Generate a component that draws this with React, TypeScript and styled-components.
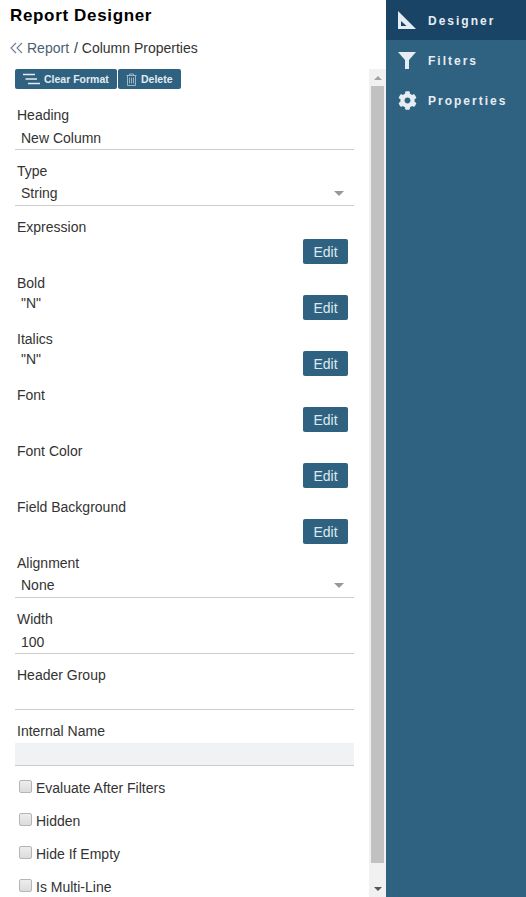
import React from "react";
import styled, { createGlobalStyle } from "styled-components";
import { FaCog } from "react-icons/fa";

const GlobalStyle = createGlobalStyle`
  html, body {
    margin: 0;
    padding: 0;
    height: 100%;
    overflow: hidden;
    background: #fff;
    font-family: "Liberation Sans", Arial, sans-serif;
  }
`;

const Page = styled.div`
  display: flex;
  width: 526px;
  height: 897px;
  overflow: hidden;
`;

const Main = styled.main`
  width: 386px;
  height: 897px;
  display: flex;
  flex-direction: column;
`;

const Title = styled.h1`
  margin: 0;
  padding: 6px 0 0 10px;
  height: 25px;
  font-size: 17px;
  line-height: 20px;
  font-weight: 700;
  letter-spacing: 0.66px;
  color: #000;
`;

const Breadcrumb = styled.div`
  display: flex;
  align-items: center;
  height: 38px;
  box-sizing: border-box;
  padding: 0 0 4px 10px;
  font-size: 14px;
  color: #333;
`;

const CrumbLink = styled.span`
  color: #4b5f73;
  margin: 0 5px 0 4px;
`;

const Body = styled.div`
  flex: 1;
  min-height: 0;
  display: flex;
`;

const Scroller = styled.div`
  width: 369px;
  overflow: hidden;
  padding: 0 15px;
  box-sizing: border-box;
`;

const Toolbar = styled.div`
  display: flex;
  gap: 1px;
  margin-bottom: 16px;
`;

const ToolButton = styled.button<{ $width: number }>`
  display: flex;
  align-items: center;
  gap: 4px;
  width: ${({ $width }) => $width}px;
  height: 20px;
  box-sizing: border-box;
  padding: 0 0 0 8px;
  border: 0;
  border-radius: 2px;
  background: #2f6280;
  color: #e3ebf0;
  font-family: inherit;
  font-size: 10.5px;
  font-weight: 700;
`;

const Field = styled.div<{ $short?: boolean }>`
  height: ${({ $short }) => ($short ? 50 : 56)}px;
`;

const Label = styled.div`
  height: 20px;
  padding-left: 2px;
  font-size: 14px;
  line-height: 20px;
  color: #333;
`;

const Value = styled.div<{ $select?: boolean }>`
  height: 25px;
  box-sizing: border-box;
  padding: ${({ $select }) => ($select ? 2 : 3)}px 6px 0;
  font-size: 14px;
  line-height: 20px;
  color: #333;
  display: flex;
  align-items: flex-start;
  justify-content: space-between;
  border-bottom: 1px solid #ccc;
`;

const ReadOnlyValue = styled.div`
  height: 23px;
  margin-top: 2px;
  box-sizing: border-box;
  border-bottom: 1px solid #ccc;
  background: #f1f2f3;
`;

const Caret = styled.span`
  width: 0;
  height: 0;
  margin: 8px 4px 0 0;
  border-left: 5px solid transparent;
  border-right: 5px solid transparent;
  border-top: 5px solid #999;
`;

const EditRow = styled.div`
  display: flex;
  justify-content: space-between;
  align-items: flex-start;
  padding: 2px 6px 0;
  font-size: 14px;
  line-height: 16px;
  color: #333;
`;

const EditButton = styled.button`
  width: 45px;
  height: 25px;
  border: 0;
  border-radius: 2px;
  background: #2f6280;
  color: #dfe8ee;
  font-family: inherit;
  font-size: 14px;
  padding: 0;
`;

const CheckRow = styled.label`
  display: flex;
  align-items: center;
  height: 33px;
  padding-left: 4px;
  gap: 4px;
  font-size: 14px;
  color: #333;
`;

const CheckBox = styled.span`
  width: 13px;
  height: 13px;
  box-sizing: border-box;
  margin-top: -3px;
  border: 1px solid #b5b5b5;
  border-radius: 2px;
  background: linear-gradient(#ededed, #dcdcdc);
`;

const ScrollBar = styled.div`
  width: 17px;
  display: flex;
  flex-direction: column;
  align-items: center;
  background: #f1f1f1;
`;

const ScrollEnd = styled.div`
  height: 17px;
  width: 100%;
  display: flex;
  align-items: center;
  justify-content: center;
`;

const ScrollSpacer = styled.div`
  flex: 1;
`;

const Arrow = styled.span<{ $down?: boolean }>`
  width: 0;
  height: 0;
  border-left: 4px solid transparent;
  border-right: 4px solid transparent;
  border-top: ${({ $down }) => ($down ? "4px solid #555" : "0")};
  border-bottom: ${({ $down }) => ($down ? "0" : "4px solid #a3a3a3")};
`;

const Thumb = styled.div`
  width: 13px;
  height: 777px;
  background: #c1c1c1;
`;

const Sidebar = styled.nav`
  width: 140px;
  height: 897px;
  background: #2f6280;
`;

const NavItem = styled.div<{ $active?: boolean }>`
  height: 40px;
  display: flex;
  align-items: center;
  padding-left: 11px;
  gap: 11px;
  background: ${({ $active }) => ($active ? "#1a4466" : "transparent")};
  color: #e6edf2;
  font-size: 12px;
  line-height: 14px;
  font-weight: 700;
  letter-spacing: 2px;
`;

const NavLabel = styled.span`
  padding-top: 1px;
`;

const NavIcon = styled.span`
  width: 20px;
  height: 20px;
  display: flex;
  align-items: center;
  justify-content: center;
  font-size: 19px;
`;

const SetSquare = () => (
  <svg width="20" height="20" viewBox="0 0 20 20" fill="none" aria-hidden="true">
    <path
      fillRule="evenodd"
      clipRule="evenodd"
      d="M1 1l18 18H1V1zm3 10v5h5.5L4 11z"
      fill="#e6edf2"
    />
  </svg>
);

const FunnelIcon = () => (
  <svg width="20" height="20" viewBox="0 0 20 20" aria-hidden="true">
    <path d="M1 2h18l-7 8v9H8v-9z" fill="#e6edf2" />
  </svg>
);

const ClearIcon = () => (
  <svg width="17" height="12" viewBox="0 0 17 12" aria-hidden="true">
    <path d="M0 1.5h12M2.5 6H14M5 10.5h12" stroke="#e3ebf0" strokeWidth="1.5" />
  </svg>
);

const TrashIcon = () => (
  <svg width="11" height="13" viewBox="0 0 11 13" fill="none" aria-hidden="true">
    <path
      d="M0.5 2.5h10M3.5 2.5V1h4v1.5M1.5 2.5v10h8v-10M3.5 4.5v6M5.5 4.5v6M7.5 4.5v6"
      stroke="#a9bfcc"
      strokeWidth="0.9"
    />
  </svg>
);

const DoubleChevron = () => (
  <svg width="13" height="12" viewBox="0 0 13 12" fill="none" aria-hidden="true">
    <path d="M6 1L1 6l5 5M12 1L7 6l5 5" stroke="#6b7d8e" strokeWidth="1.1" />
  </svg>
);

const editFields = [
  { label: "Expression", value: "" },
  { label: "Bold", value: '"N"' },
  { label: "Italics", value: '"N"' },
  { label: "Font", value: "" },
  { label: "Font Color", value: "" },
  { label: "Field Background", value: "" },
];

const checks = ["Evaluate After Filters", "Hidden", "Hide If Empty", "Is Multi-Line"];

const nav = [
  { label: "Designer", icon: <SetSquare />, active: true },
  { label: "Filters", icon: <FunnelIcon /> },
  { label: "Properties", icon: <FaCog /> },
];

const App = () => (
  <Page>
    <GlobalStyle />
    <Main>
      <Title>Report Designer</Title>
      <Breadcrumb>
        <DoubleChevron />
        <CrumbLink>Report</CrumbLink>/&nbsp;Column Properties
      </Breadcrumb>
      <Body>
        <Scroller>
          <Toolbar>
            <ToolButton $width={102}>
              <ClearIcon />
              Clear Format
            </ToolButton>
            <ToolButton $width={63}>
              <TrashIcon />
              Delete
            </ToolButton>
          </Toolbar>

          <Field>
            <Label>Heading</Label>
            <Value>New Column</Value>
          </Field>
          <Field>
            <Label>Type</Label>
            <Value $select>
              String
              <Caret />
            </Value>
          </Field>
          {editFields.map(({ label, value }) => (
            <Field key={label}>
              <Label>{label}</Label>
              <EditRow>
                <span>{value}</span>
                <EditButton>Edit</EditButton>
              </EditRow>
            </Field>
          ))}
          <Field>
            <Label>Alignment</Label>
            <Value $select>
              None
              <Caret />
            </Value>
          </Field>
          <Field>
            <Label>Width</Label>
            <Value>100</Value>
          </Field>
          <Field>
            <Label>Header Group</Label>
            <Value />
          </Field>
          <Field $short>
            <Label>Internal Name</Label>
            <ReadOnlyValue />
          </Field>
          {checks.map((c) => (
            <CheckRow key={c}>
              <CheckBox />
              {c}
            </CheckRow>
          ))}
        </Scroller>
        <ScrollBar>
          <ScrollEnd>
            <Arrow />
          </ScrollEnd>
          <Thumb />
          <ScrollSpacer />
          <ScrollEnd>
            <Arrow $down />
          </ScrollEnd>
        </ScrollBar>
      </Body>
    </Main>
    <Sidebar>
      {nav.map(({ label, icon, active }) => (
        <NavItem key={label} $active={active}>
          <NavIcon>{icon}</NavIcon>
          <NavLabel>{label}</NavLabel>
        </NavItem>
      ))}
    </Sidebar>
  </Page>
);

export default App;
